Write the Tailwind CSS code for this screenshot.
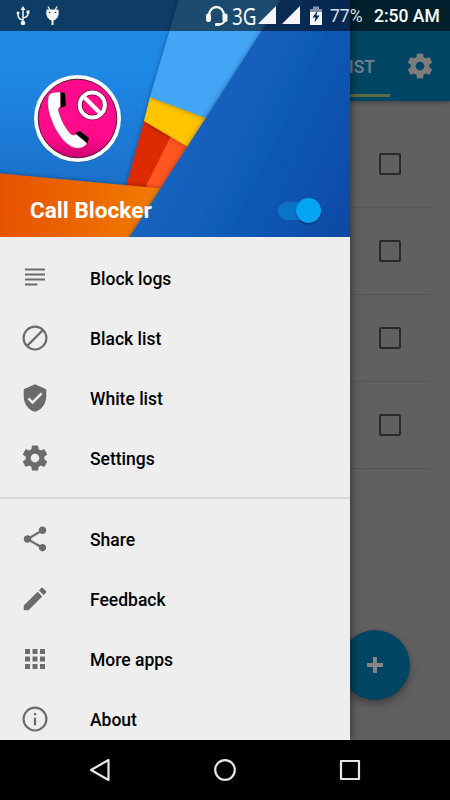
<!DOCTYPE html>
<html lang="en">
<head>
<meta charset="utf-8">
<title>Call Blocker</title>
<script src="https://cdn.jsdelivr.net/npm/@tailwindcss/browser@4"></script>
</head>
<body class="bg-black font-['Roboto',sans-serif]">
<div class="relative w-[450px] h-[800px] overflow-hidden flex flex-col bg-[#606060]">

  <!-- Dimmed list screen -->
  <header class="h-[101px] shrink-0 bg-[#004563] pt-[31px] flex justify-end shadow-[0_1px_4px_rgba(0,0,0,.4)]">
    <div class="w-[60px] h-[66px] border-b-[3px] border-[#5b6a42] flex items-center justify-end pr-[15px] pt-[9px] text-[17.5px] font-medium text-[#74818a] whitespace-nowrap">BLACK LIST</div>
    <div class="w-[60px] h-[70px] flex items-center justify-center">
      <svg class="w-[30px] h-[30px]" viewBox="0 0 24 24" fill="#7c7c7c"><path d="M19.43 12.98c.04-.32.07-.64.07-.98s-.03-.66-.07-.98l2.11-1.65c.19-.15.24-.42.12-.64l-2-3.46c-.12-.22-.39-.3-.61-.22l-2.49 1c-.52-.4-1.08-.73-1.69-.98l-.38-2.65C14.46 2.18 14.25 2 14 2h-4c-.25 0-.46.18-.49.42l-.38 2.65c-.61.25-1.17.59-1.69.98l-2.49-1c-.23-.09-.49 0-.61.22l-2 3.46c-.13.22-.07.49.12.64l2.11 1.65c-.04.32-.07.65-.07.98s.03.66.07.98l-2.11 1.65c-.19.15-.24.42-.12.64l2 3.46c.12.22.39.3.61.22l2.49-1c.52.4 1.08.73 1.69.98l.38 2.65c.03.24.24.42.49.42h4c.25 0 .46-.18.49-.42l.38-2.65c.61-.25 1.17-.59 1.69-.98l2.49 1c.23.09.49 0 .61-.22l2-3.46c.12-.22.07-.49-.12-.64l-2.11-1.65zM12 15.5c-1.93 0-3.5-1.57-3.5-3.5s1.57-3.5 3.5-3.5 3.5 1.57 3.5 3.5-1.57 3.5-3.5 3.5z"/></svg>
    </div>
  </header>
  <main class="flex-1 pt-[20px] pr-[20px]">
    <div class="h-[87px] border-b border-[#555] flex items-center justify-end pr-[29px]"><span class="w-[22px] h-[22px] border-2 border-[#292929] rounded-[2px]"></span></div>
    <div class="h-[87px] border-b border-[#555] flex items-center justify-end pr-[29px]"><span class="w-[22px] h-[22px] border-2 border-[#292929] rounded-[2px]"></span></div>
    <div class="h-[87px] border-b border-[#555] flex items-center justify-end pr-[29px]"><span class="w-[22px] h-[22px] border-2 border-[#292929] rounded-[2px]"></span></div>
    <div class="h-[87px] border-b border-[#555] flex items-center justify-end pr-[29px]"><span class="w-[22px] h-[22px] border-2 border-[#292929] rounded-[2px]"></span></div>
  </main>
  <div class="absolute left-[340px] top-[630px] w-[70px] h-[70px] rounded-full bg-[#004563] shadow-[0_4px_8px_rgba(0,0,0,.35)] flex items-center justify-center">
    <svg class="w-[18px] h-[18px]" viewBox="0 0 18 18"><path d="M9 1v16M1 9h16" stroke="#858585" stroke-width="4"/></svg>
  </div>

  <!-- Navigation drawer -->
  <aside class="absolute left-0 top-0 w-[350px] h-[740px] bg-[#eee] shadow-[1px_0_8px_rgba(0,0,0,.5)]">
    <div class="relative h-[237px]">
      <svg class="absolute inset-0 w-[350px] h-[237px]" viewBox="0 0 350 237">
        <defs>
          <linearGradient id="sky" x1="0" y1="0" x2="0" y2="1"><stop offset=".3" stop-color="#1e88e5"/><stop offset=".8" stop-color="#1b6fca"/></linearGradient>
          <linearGradient id="deep" gradientUnits="userSpaceOnUse" x1="180" y1="100" x2="370" y2="190"><stop offset="0" stop-color="#1565c0"/><stop offset=".45" stop-color="#115bb8"/><stop offset="1" stop-color="#0d4aa4"/></linearGradient>
          <linearGradient id="org"><stop offset="0" stop-color="#e65100"/><stop offset="1" stop-color="#f07c00"/></linearGradient>
          <linearGradient id="pink" x1="0" y1="0" x2="0" y2="1"><stop offset=".75" stop-color="#ff0b8b"/><stop offset="1" stop-color="#cf0070"/></linearGradient>
          <filter id="sh" x="-20%" y="-20%" width="140%" height="140%"><feDropShadow dx="0" dy="0" stdDeviation="2.500" flood-color="#000" flood-opacity=".38"/></filter>
        </defs>
        <rect width="350" height="237" fill="url(#sky)"/>
        <g filter="url(#sh)"><path d="M144 121 188 146 161 189 126 187z" fill="#dd2c00"/><path d="M171 136 195 150 161 190 145 188z" fill="#ff5722"/></g>
        <path d="M150 97 208 118 188 147 144 121z" fill="#ffc400" filter="url(#sh)"/>
        <path d="M179-1H290L206 118 150 97z" fill="#42a5f5" filter="url(#sh)"/>
        <path d="M-5 173 161 188.500 131 240H-5z" fill="url(#org)" filter="url(#sh)"/>
        <path d="M282-1H360V240H127.500z" fill="url(#deep)" filter="url(#sh)"/>
        <circle cx="77.500" cy="119.500" r="43" fill="#000" opacity=".3"/>
        <circle cx="77.500" cy="118.500" r="43.500" fill="#fafafa"/>
        <circle cx="77.500" cy="118.500" r="39.300" fill="url(#pink)" stroke="#52113a" stroke-width="1"/>
        <path d="M59 92 65 93 66 106 60 108zM75 133 80 131 89 138 87 144z" fill="#000"/>
        <path d="M49 95C51 92 56 92 60.500 92L60.500 107C58 108 58 110 59 112C61 120 66 129 71 134C73 135.500 74 135 76 134L87 143C86 147 80 149 75 148C66 146 56 133 51 119C47 109 47 99 49 95Z" fill="#fff" stroke="#80104c" stroke-width=".5"/>
        <g fill="none" stroke="#fff" stroke-width="4"><circle cx="92.300" cy="105" r="12.600" stroke="#7a0745" stroke-width="5.500"/><circle cx="92.300" cy="105" r="12.600"/><path d="M84 97 100 113"/></g>
      </svg>
      <div class="absolute left-[30px] right-[29px] top-[197px] h-[27px] flex items-center justify-between">
        <span class="text-[22.6px] leading-[27px] font-bold text-white whitespace-nowrap">Call Blocker</span>
        <span class="w-[43px] h-[18px] rounded-full bg-[#0c73cb] flex items-center justify-end"><span class="w-[25px] h-[25px] shrink-0 rounded-full bg-[#03a4f1] shadow-[0_1px_2px_rgba(0,0,0,.4)]"></span></span>
      </div>
    </div>
    <nav class="h-[503px] overflow-hidden pt-[11px] text-[17.5px] leading-[26px] font-medium text-black">
      <div class="h-[60px] pl-[20px] flex items-center gap-[40px]"><svg class="w-[30px] h-[30px]" viewBox="0 0 24 24" fill="#6b6b6b"><path d="M4 4.400h16v1.600H4zM4 8.400h16V10H4zM4 12.400h16V14H4zM4 16.400h10V18H4z"/></svg><span class="pt-[2px]">Block logs</span></div>
      <div class="h-[60px] pl-[20px] flex items-center gap-[40px]"><svg class="w-[30px] h-[30px]" viewBox="0 0 24 24" fill="none" stroke="#6b6b6b" stroke-width="1.700"><circle cx="12" cy="12" r="9.150"/><path d="M5.500 18.500 18.500 5.500"/></svg><span class="pt-[2px]">Black list</span></div>
      <div class="h-[60px] pl-[20px] flex items-center gap-[40px]"><svg class="w-[30px] h-[30px]" viewBox="0 0 24 24" fill="#6b6b6b"><path d="M12 1 3 5v6c0 5.550 3.840 10.740 9 12 5.160-1.260 9-6.450 9-12V5l-9-4zm-2 16-4-4 1.410-1.410L10 14.170l6.590-6.590L18 9l-8 8z"/></svg><span class="pt-[2px]">White list</span></div>
      <div class="h-[60px] pl-[20px] flex items-center gap-[40px]"><svg class="w-[30px] h-[30px]" viewBox="0 0 24 24" fill="#6b6b6b"><path d="M19.430 12.980c.04-.32.07-.64.07-.98s-.03-.66-.07-.98l2.110-1.650c.19-.15.24-.42.12-.64l-2-3.460c-.12-.22-.39-.3-.61-.22l-2.490 1c-.52-.4-1.080-.73-1.690-.98l-.38-2.650C14.460 2.180 14.250 2 14 2h-4c-.25 0-.46.18-.49.42l-.38 2.650c-.61.25-1.170.59-1.690.98l-2.490-1c-.23-.09-.49 0-.61.22l-2 3.460c-.13.22-.07.49.12.64l2.110 1.650c-.04.32-.07.65-.07.98s.03.66.07.98l-2.110 1.650c-.19.15-.24.42-.12.64l2 3.460c.12.22.39.3.61.22l2.490-1c.52.4 1.080.73 1.690.98l.38 2.650c.03.24.24.42.49.42h4c.25 0 .46-.18.49-.42l.38-2.650c.61-.25 1.170-.59 1.690-.98l2.490 1c.23.09.49 0 .61-.22l2-3.460c.12-.22.07-.49-.12-.64l-2.110-1.650zM12 15.500c-1.930 0-3.500-1.570-3.500-3.500s1.570-3.500 3.500-3.500 3.500 1.570 3.500 3.500-1.570 3.500-3.500 3.500z"/></svg><span class="pt-[2px]">Settings</span></div>
      <div class="mt-[9px] mb-[10px] h-[2px] bg-[#d9d9d9]"></div>
      <div class="h-[60px] pl-[20px] flex items-center gap-[40px]"><svg class="w-[30px] h-[30px]" viewBox="0 0 24 24" fill="#6b6b6b"><path d="M18 16.080c-.76 0-1.440.3-1.960.77L8.910 12.700c.05-.23.09-.46.09-.7s-.04-.47-.09-.7l7.050-4.110c.54.5 1.250.81 2.040.81 1.660 0 3-1.340 3-3s-1.340-3-3-3-3 1.340-3 3c0 .24.04.47.09.7L8.040 9.810C7.500 9.310 6.790 9 6 9c-1.660 0-3 1.340-3 3s1.340 3 3 3c.79 0 1.500-.31 2.040-.81l7.120 4.160c-.05.21-.08.43-.08.65 0 1.610 1.310 2.920 2.920 2.920s2.920-1.310 2.920-2.920-1.310-2.920-2.920-2.920z"/></svg><span class="pt-[2px]">Share</span></div>
      <div class="h-[60px] pl-[20px] flex items-center gap-[40px]"><svg class="w-[30px] h-[30px]" viewBox="0 0 24 24" fill="#6b6b6b"><path d="M3 17.250V21h3.750L17.810 9.940l-3.750-3.750L3 17.250zM20.710 7.040c.39-.39.39-1.020 0-1.410l-2.340-2.340c-.39-.39-1.020-.39-1.410 0l-1.830 1.830 3.750 3.750 1.830-1.830z"/></svg><span class="pt-[2px]">Feedback</span></div>
      <div class="h-[60px] pl-[20px] flex items-center gap-[40px]"><svg class="w-[30px] h-[30px]" viewBox="0 0 24 24" fill="#6b6b6b"><path d="M4 8h4V4H4v4zm6 12h4v-4h-4v4zm-6 0h4v-4H4v4zm0-6h4v-4H4v4zm6 0h4v-4h-4v4zm6-10v4h4V4h-4zm-6 4h4V4h-4v4zm6 6h4v-4h-4v4zm0 6h4v-4h-4v4z"/></svg><span class="pt-[2px]">More apps</span></div>
      <div class="h-[60px] pl-[20px] flex items-center gap-[40px]"><svg class="w-[30px] h-[30px]" viewBox="0 0 24 24" fill="#6b6b6b"><circle cx="12" cy="12" r="9.150" fill="none" stroke="#6b6b6b" stroke-width="1.700"/><path d="M11.100 11h1.800v6h-1.800zM11.100 7.200h1.800V9h-1.800z"/></svg><span class="pt-[2px]">About</span></div>
    </nav>
  </aside>

  <!-- Status bar -->
  <div class="absolute left-0 top-0 w-[450px] h-[31px] bg-black/55 text-white flex items-center">
    <svg class="w-[332px] h-[31px] shrink-0" viewBox="0 0 332 31" fill="#f5f5f5">
      <g stroke="#f5f5f5" stroke-width="1.500" fill="none"><path d="M23 23V9M23 20C18 19 18 17 18 13M23 18C28 17 28 15 28 12"/></g>
      <path d="M23 6 25.500 10H20.500z"/><circle cx="23" cy="23" r="2.300"/><circle cx="18" cy="13" r="1.500"/><path d="M26.500 10.500h3v3h-3z"/>
      <path d="M46.500 9.500H58.500Q59.500 14 57.500 17.500Q55.500 20.500 52.500 20.500T47.500 17.500Q45.500 14 46.500 9.500Z"/><path d="M48 6.500 50 10M57 6.500 55 10" stroke="#f5f5f5" stroke-width="1.300"/><path d="M51.500 20h2v5h-2z"/><circle cx="49.500" cy="12.500" r=".8" fill="#123f6b"/><circle cx="55.500" cy="12.500" r=".8" fill="#123f6b"/>
      <path d="M209 16C209 4 224 4 224 16" fill="none" stroke="#f5f5f5" stroke-width="2.300"/><rect x="206" y="13.500" width="5" height="8.500" rx="2"/><rect x="222.500" y="13.500" width="5" height="8.500" rx="2"/><path d="M224.500 21Q223 24.500 218 24.500" fill="none" stroke="#f5f5f5" stroke-width="2"/><rect x="215" y="23" width="5" height="3" rx="1"/>
      <text x="232" y="24.500" font-family="Noto Sans, sans-serif" font-size="23" textLength="24.500" lengthAdjust="spacingAndGlyphs">3G</text>
      <path d="M258 24 276 6V24zM282 24 300 6V24z"/>
      <path d="M313 6.500h6V9h3v4h-12V9h3z" fill="#8792a5"/><path d="M310 12h12v13h-12z"/><path d="M317.500 10.500 312.500 17.500H315.500L314.500 22.500 319.500 15.500H316.500z" fill="#0b2d5b"/>
    </svg>
    <span class="w-[32px] shrink-0 -ml-[2px] pt-[2px] text-[17.5px] font-normal text-white/85 whitespace-nowrap">77%</span>
    <span class="ml-[12px] pt-[2px] text-[17.5px] font-medium whitespace-nowrap">2:50 AM</span>
  </div>

  <!-- System navigation -->
  <footer class="relative h-[60px] shrink-0 bg-black flex items-center justify-center gap-[95px]">
    <svg class="w-[30px] h-[30px]" viewBox="0 0 30 30" fill="none" stroke="#e6e6e6" stroke-width="2.200" stroke-linejoin="round"><path d="M6 15 23.500 5V25z"/></svg>
    <svg class="w-[30px] h-[30px]" viewBox="0 0 30 30" fill="none" stroke="#e6e6e6" stroke-width="2.200"><circle cx="15" cy="15" r="9.800"/></svg>
    <svg class="w-[30px] h-[30px]" viewBox="0 0 30 30" fill="none" stroke="#e6e6e6" stroke-width="2.200" stroke-linejoin="round"><path d="M6 6h18v18H6z"/></svg>
  </footer>
</div>
</body>
</html>
